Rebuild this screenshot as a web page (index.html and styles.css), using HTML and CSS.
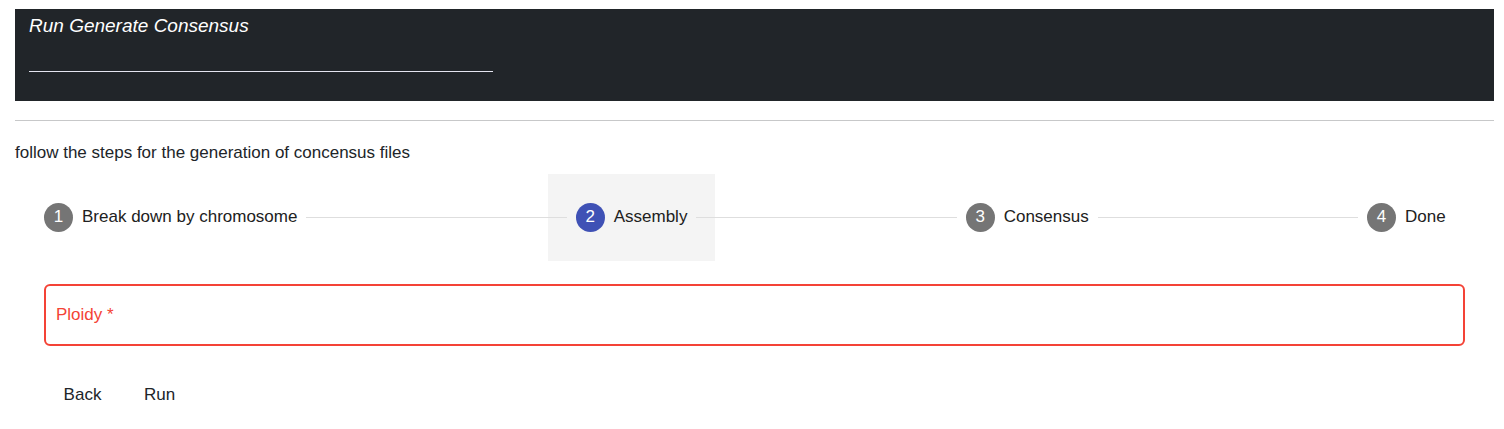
FILE: index.html
```html
<!DOCTYPE html>
<html lang="en">
<head>
<meta charset="utf-8">
<meta name="viewport" content="width=device-width, initial-scale=1">
<title>Run Generate Consensus</title>
<link rel="stylesheet" href="styles.css">
</head>
<body>
<main class="page">
  <header class="banner">
    <h1 class="banner-title">Run Generate Consensus</h1>
    <hr class="banner-rule">
  </header>
  <hr class="divider">
  <p class="intro">follow the steps for the generation of concensus files</p>
  <section class="stepper">
    <div class="steps">
      <button type="button" class="step"><span class="step-icon">1</span><span class="step-label">Break down by chromosome</span></button>
      <span class="step-line"></span>
      <button type="button" class="step step-active" aria-current="step"><span class="step-icon">2</span><span class="step-label">Assembly</span></button>
      <span class="step-line"></span>
      <button type="button" class="step"><span class="step-icon">3</span><span class="step-label">Consensus</span></button>
      <span class="step-line"></span>
      <button type="button" class="step"><span class="step-icon">4</span><span class="step-label">Done</span></button>
    </div>
    <form class="form">
      <div class="field">
        <label class="field-label" for="ploidy">Ploidy *</label>
        <input class="field-input" id="ploidy" type="text" required>
      </div>
      <div class="actions">
        <button type="button" class="action">Back</button>
        <button type="button" class="action">Run</button>
      </div>
    </form>
  </section>
</main>
</body>
</html>
```

FILE: styles.css
```css
* {
  box-sizing: border-box;
}

body {
  margin: 0;
  background: #fff;
  color: #212529;
  font: 17px/24px "Liberation Sans", Arial, sans-serif;
}

button,
input {
  font: inherit;
}

.page {
  padding: 9px 10px 0 15px;
}

.banner {
  padding: 5px 14px 29px;
  background: #212529;
  color: #fff;
}

.banner-title {
  margin: 0 0 33px;
  font-size: 19px;
  font-style: italic;
  font-weight: 500;
  line-height: 24px;
}

.banner-rule {
  width: 32%;
  margin: 0;
  border: 0;
  border-top: 1px solid #e4e5f0;
}

.divider {
  margin: 19px 0 20px;
  border: 0;
  border-top: 1px solid #c7c8c9;
}

.intro {
  margin: 0 0 9px;
}

.stepper {
  padding: 0 1px;
}

.steps {
  display: flex;
  align-items: center;
}

.step {
  display: flex;
  align-items: center;
  gap: 9px;
  padding: 29px 28px;
  border: 0;
  background: none;
  color: #212121;
  text-align: left;
  white-space: nowrap;
  cursor: pointer;
}

.step-active {
  background: #f4f4f4;
}

.step-icon {
  width: 29px;
  height: 29px;
  border-radius: 50%;
  background: #757575;
  color: #fff;
  line-height: 28px;
  text-align: center;
}

.step-active .step-icon {
  background: #3f51b5;
}

.step-label {
  min-width: 60px;
  padding-bottom: 1px;
}

.step-line {
  z-index: 1;
  flex: 1;
  height: 1px;
  margin: 0 -19px;
  background: #dedede;
}

.form {
  padding: 23px 28px;
}

.field {
  display: flex;
  align-items: center;
  height: 62px;
  padding: 0 10px;
  border: 2px solid #f44336;
  border-radius: 6px;
}

.field-label {
  padding-right: 10px;
  color: #f44336;
}

.field-input {
  flex: 1;
  min-width: 0;
  border: 0;
  outline: 0;
  background: none;
}

.actions {
  display: flex;
  padding-top: 27px;
}

.action {
  min-width: 77px;
  height: 44px;
  padding: 0 19px;
  border: 0;
  background: none;
  color: #212529;
  cursor: pointer;
}
```
